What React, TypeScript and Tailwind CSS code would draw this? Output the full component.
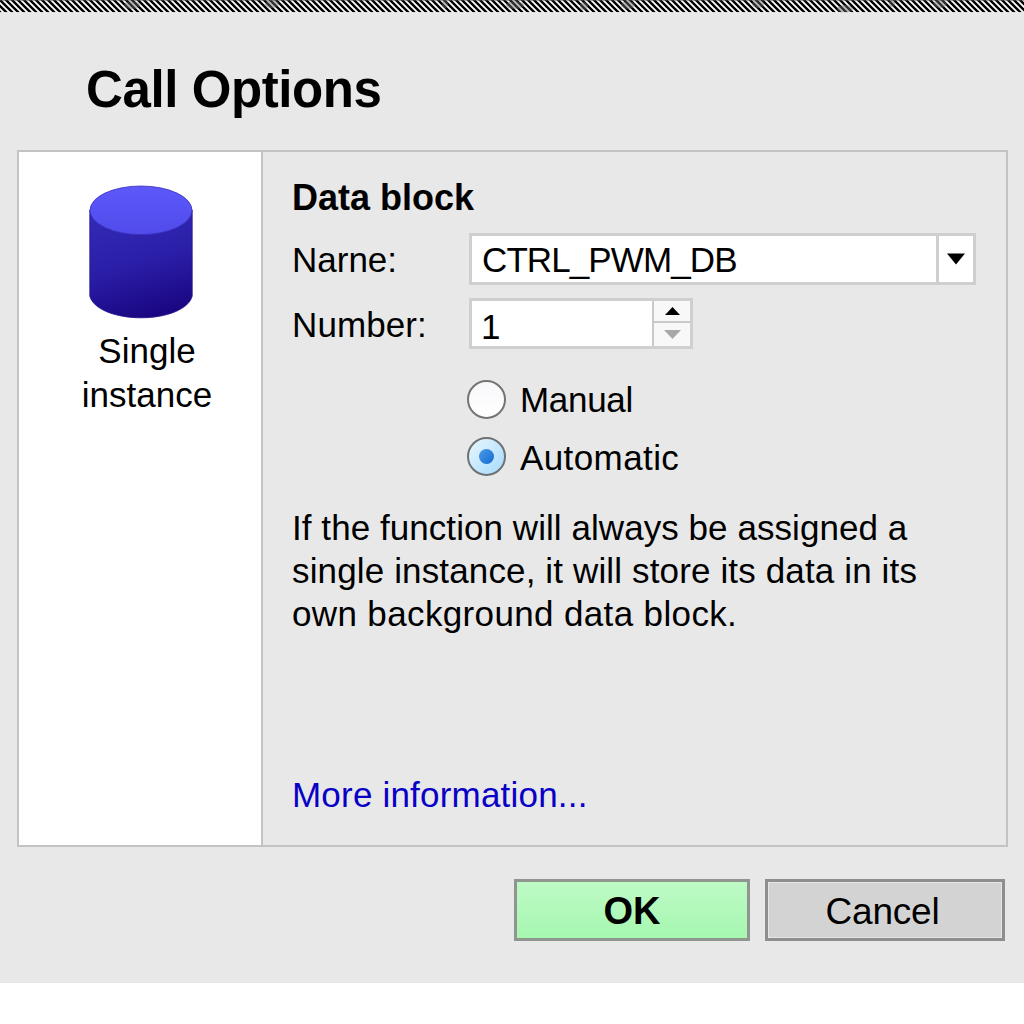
import { useState } from "react";

type Mode = "manual" | "automatic";

// worn patches along the hatched strip
const smudges = [
  { x: 132, y: 5, rx: 8 },
  { x: 272, y: 4, rx: 7 },
  { x: 445, y: 4, rx: 3 },
  { x: 515, y: 5, rx: 9 },
  { x: 584, y: 6, rx: 4 },
  { x: 628, y: 5, rx: 7 },
  { x: 758, y: 4, rx: 6 },
  { x: 845, y: 9, rx: 8 },
  { x: 892, y: 3, rx: 3 },
  { x: 940, y: 4, rx: 7 },
];

function Hatching() {
  return (
    <svg className="block h-[13px] w-full shrink-0" viewBox="0 0 1024 13">
      <defs>
        <pattern id="hatch" width="6" height="6" patternUnits="userSpaceOnUse">
          <rect width="6" height="6" fill="#fff" />
          <path d="M-6 -6L12 12M-6 0L6 12M0 -6L12 6" stroke="#000" strokeWidth="2.400" />
        </pattern>
      </defs>
      <rect width="1024" height="12.300" fill="url(#hatch)" />
      {smudges.map((s) => (
        <ellipse key={s.x} cx={s.x} cy={s.y} rx={s.rx} ry="4" fill="#6b6b6b" opacity="0.45" />
      ))}
      <rect width="1024" height="1" fill="#555" opacity="0.5" />
      <rect y="12.300" width="1024" height="0.700" fill="#f3f3f3" />
    </svg>
  );
}

function Cylinder() {
  return (
    <svg className="block h-[136px] w-[106px]" viewBox="0 0 106 136">
      <defs>
        <linearGradient id="body" x1="0.35" y1="0" x2="0.6" y2="1">
          <stop offset="0" stopColor="#3329b4" />
          <stop offset="0.5" stopColor="#2a1ea8" />
          <stop offset="1" stopColor="#190680" />
        </linearGradient>
        <linearGradient id="lid" x1="0" y1="0" x2="0" y2="1">
          <stop offset="0" stopColor="#5d58fa" />
          <stop offset="1" stopColor="#504bea" />
        </linearGradient>
      </defs>
      <path d="M1.8 26V112C5 125 27 133.8 53 133.8S101 125 104.200 112V26Z" fill="url(#body)" stroke="#20128c" strokeWidth="0.8" />
      <ellipse cx="53" cy="26.300" rx="51" ry="24.300" fill="url(#lid)" stroke="#3a31bd" strokeWidth="0.8" />
    </svg>
  );
}

function Radio({ label, checked, onSelect }: { label: string; checked: boolean; onSelect: () => void }) {
  return (
    <button role="radio" aria-checked={checked} onClick={onSelect} className="flex h-[57px] items-center gap-[14px]">
      <span
        className={
          checked
            ? "flex size-[39px] items-center justify-center rounded-full border-2 border-[#6e7275] bg-linear-to-br from-[#e9f6fe] to-[#a5dbfb]"
            : "flex size-[39px] items-center justify-center rounded-full border-2 border-[#747474] bg-linear-to-b from-[#f8f8fb] to-white"
        }
      >
        {checked && <span className="size-[15px] rounded-full bg-linear-to-br from-[#4a9cea] to-[#1269cf]" />}
      </span>
      <span className={checked ? "pt-[2px] leading-[44px] tracking-[0.4px]" : "pt-px leading-[44px] tracking-[-0.3px]"}>{label}</span>
    </button>
  );
}

export default function App() {
  const [mode, setMode] = useState<Mode>("automatic");

  return (
    <div className="h-[1024px] w-[1024px] overflow-hidden bg-white font-['Liberation_Sans',Arial,sans-serif] text-[35px] text-black">
      <div className="flex h-[983px] flex-col bg-[#e8e8e8]">
        <Hatching />
        <h1 className="mt-[47px] ml-[86px] text-[51px] leading-[60px] font-bold tracking-[-0.4px]">Call Options</h1>

        <div className="mt-[30px] ml-[17px] flex h-[697px] w-[991px] shrink-0 border-2 border-[#c3c3c3]">
          <aside className="flex w-[244px] shrink-0 flex-col items-center border-r-2 border-[#c3c3c3] bg-white pt-[32px]">
            <div className="ml-px">
              <Cylinder />
            </div>
            <p className="mt-[9px] ml-[14px] text-center leading-[44px]">
              Single
              <br />
              instance
            </p>
          </aside>

          <section className="flex flex-1 flex-col pl-[29px]">
            <h2 className="mt-[24px] text-[36px] leading-[44px] font-bold">Data block</h2>

            <div className="mt-[13px] flex h-[52px] items-center">
              <label className="w-[177px] pt-[2px]">Narne:</label>
              <div className="flex h-[52px] w-[507px] border-3 border-[#cfcfcf] bg-white">
                <span className="flex-1 pl-[10px] leading-[47px] tracking-[-0.9px]">CTRL_PWM_DB</span>
                <button className="flex w-[37px] items-center justify-center border-l-3 border-[#cfcfcf]">
                  <svg className="h-[12px] w-[18px]" viewBox="0 0 18 12">
                    <path d="M0 0.500H18L9 11.500Z" />
                  </svg>
                </button>
              </div>
            </div>

            <div className="mt-[13px] flex h-[51px] items-center">
              <label className="w-[177px] pt-[3px] tracking-[0.1px]">Number:</label>
              <div className="flex h-[51px] w-[224px] border-3 border-[#cfcfcf] bg-white">
                <span className="flex-1 pl-[9px] leading-[51px]">1</span>
                <div className="flex w-[38px] flex-col border-l-2 border-[#c9c9c9] bg-[#f8f8f8]">
                  <button className="flex h-[22px] items-center justify-center border-b-2 border-[#c9c9c9]">
                    <svg className="h-[8px] w-[15px]" viewBox="0 0 15 8">
                      <path d="M0 8H15L7.500 0Z" />
                    </svg>
                  </button>
                  <button className="flex flex-1 items-center justify-center">
                    <svg className="h-[9px] w-[17px]" viewBox="0 0 17 9">
                      <path d="M0 0H17L8.500 9Z" fill="#a8a8a8" />
                    </svg>
                  </button>
                </div>
              </div>
            </div>

            <div role="radiogroup" className="mt-[22px] ml-[175px] flex flex-col">
              <Radio label="Manual" checked={mode === "manual"} onSelect={() => setMode("manual")} />
              <Radio label="Automatic" checked={mode === "automatic"} onSelect={() => setMode("automatic")} />
            </div>

            <p className="mt-[21px] leading-[43px] whitespace-nowrap">
              <span className="tracking-[0.06px]">If the function will always be assigned a</span>
              <br />
              <span className="tracking-[0.14px]">single instance, it will store its data in its</span>
              <br />
              <span className="tracking-[0.36px]">own background data block.</span>
            </p>

            <a href="#" className="mt-[138px] leading-[44px] tracking-[0.2px] text-[#0800c6]">
              More information...
            </a>
          </section>
        </div>

        <div className="mt-[32px] mr-[19px] flex justify-end gap-[15px]">
          <button className="h-[62px] w-[236px] border-3 border-[#8f968f] bg-linear-to-b from-[#bdfac5] to-[#a6f7b0] pt-[3px] text-[38px] leading-[53px] font-bold">
            OK
          </button>
          <button className="h-[62px] w-[240px] border-3 border-[#8e8e8e] bg-[#d3d3d3] pt-[4px] pr-[5px] text-[37px] leading-[52px] tracking-[-0.2px] inset-shadow-[0_0_0_1px_#e6e6e6]">
            Cancel
          </button>
        </div>
      </div>
    </div>
  );
}
